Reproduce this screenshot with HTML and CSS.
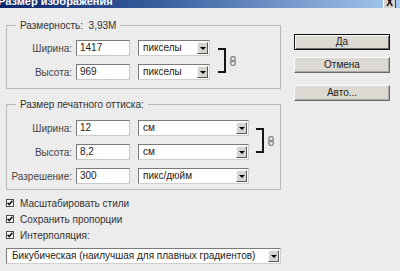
FILE: index.html
```html
<!DOCTYPE html>
<html lang="ru">
<head>
<meta charset="utf-8">
<title>Размер изображения</title>
<link rel="stylesheet" href="styles.css">
</head>
<body>
<div class="window">
  <div class="titlebar">
    <span class="title">Размер изображения</span>
    <span class="close">X</span>
  </div>
  <div class="main">
    <div class="left">
      <fieldset class="group g1">
        <legend>Размерность:&nbsp;&nbsp;3,93M</legend>
        <div class="group-body">
          <div class="rows">
            <div class="row">
              <span class="lbl">Ширина:</span>
              <span class="field">1417</span>
              <span class="select s-short"><span class="val">пикселы</span><span class="arrow"></span></span>
            </div>
            <div class="row">
              <span class="lbl">Высота:</span>
              <span class="field">969</span>
              <span class="select s-short"><span class="val">пикселы</span><span class="arrow"></span></span>
            </div>
          </div>
          <div class="link">
            <span class="bracket"></span>
            <svg class="chain" width="6" height="10" viewBox="0 0 6 10"><rect x="0.75" y="0.5" width="4.5" height="5" rx="2.2" fill="none" stroke="#8a8a8a" stroke-width="1.4"/><rect x="0.75" y="4.5" width="4.5" height="5" rx="2.2" fill="none" stroke="#8a8a8a" stroke-width="1.4"/></svg>
          </div>
        </div>
      </fieldset>

      <fieldset class="group g2">
        <legend>Размер печатного оттиска:</legend>
        <div class="group-body">
          <div class="rows">
            <div class="row">
              <span class="lbl">Ширина:</span>
              <span class="field">12</span>
              <span class="select s-long"><span class="val">см</span><span class="arrow"></span></span>
            </div>
            <div class="row">
              <span class="lbl">Высота:</span>
              <span class="field">8,2</span>
              <span class="select s-long"><span class="val">см</span><span class="arrow"></span></span>
            </div>
            <div class="row">
              <span class="lbl">Разрешение:</span>
              <span class="field">300</span>
              <span class="select s-long"><span class="val">пикс/дюйм</span><span class="arrow"></span></span>
            </div>
          </div>
          <div class="link">
            <span class="bracket"></span>
            <svg class="chain" width="6" height="10" viewBox="0 0 6 10"><rect x="0.75" y="0.5" width="4.5" height="5" rx="2.2" fill="none" stroke="#8a8a8a" stroke-width="1.4"/><rect x="0.75" y="4.5" width="4.5" height="5" rx="2.2" fill="none" stroke="#8a8a8a" stroke-width="1.4"/></svg>
          </div>
        </div>
      </fieldset>

      <div class="checks">
        <div class="check"><span class="box"><svg width="6" height="6" viewBox="0 0 6 6"><polyline points="0.6,2.8 2.2,4.6 5.4,0.8" fill="none" stroke="#111" stroke-width="1.6"/></svg></span>Масштабировать стили</div>
        <div class="check"><span class="box"><svg width="6" height="6" viewBox="0 0 6 6"><polyline points="0.6,2.8 2.2,4.6 5.4,0.8" fill="none" stroke="#111" stroke-width="1.6"/></svg></span>Сохранить пропорции</div>
        <div class="check"><span class="box"><svg width="6" height="6" viewBox="0 0 6 6"><polyline points="0.6,2.8 2.2,4.6 5.4,0.8" fill="none" stroke="#111" stroke-width="1.6"/></svg></span>Интерполяция:</div>
      </div>

      <div class="select s-wide"><span class="val">Бикубическая (наилучшая для плавных градиентов)</span><span class="arrow"></span></div>
    </div>

    <div class="buttons">
      <div class="btn default">Да</div>
      <div class="btn">Отмена</div>
      <div class="btn auto">Авто...</div>
    </div>
  </div>
</div>
</body>
</html>
```

FILE: styles.css
```css
* { box-sizing: border-box; }

html, body {
  margin: 0;
  padding: 0;
  background: #ececec;
}

body {
  font-family: "Liberation Sans", Arial, sans-serif;
  font-size: 10px;
  color: #333;
  width: 400px;
  height: 271px;
  overflow: hidden;
}

.titlebar {
  height: 8px;
  display: flex;
  justify-content: space-between;
  align-items: flex-start;
  overflow: hidden;
  background: linear-gradient(to right, #0a246a 0%, #3a5f9e 40%, #a6caf0 100%);
}

.title {
  color: #fff;
  font-weight: bold;
  font-size: 11px;
  line-height: 13px;
  margin-top: -5px;
  margin-left: -2px;
  white-space: nowrap;
}

.close {
  width: 13px;
  height: 8px;
  margin-right: 4px;
  background: #d6d3cc;
  border-right: 1px solid #404040;
  border-left: 1px solid #fff;
  color: #000;
  font-weight: bold;
  font-size: 10px;
  line-height: 10px;
  text-align: center;
  overflow: hidden;
  display: flex;
  justify-content: center;
  align-items: flex-end;
}

.main {
  display: flex;
  padding: 11px 0 0 6px;
}

.left {
  width: 275px;
  display: flex;
  flex-direction: column;
}

.group {
  margin: 0;
  padding: 8px 0 8px 0;
  border: 1px solid #b9b9b9;
  min-width: 0;
}

.group legend {
  margin-left: 9px;
  padding: 0 4px;
  line-height: 13px;
  color: #333;
}

.g2 {
  margin-top: 9px;
  padding-top: 9px;
  padding-bottom: 5px;
}

.group-body {
  display: flex;
  align-items: flex-start;
}

.rows {
  display: flex;
  flex-direction: column;
  gap: 8px;
}

.row {
  display: flex;
  align-items: center;
  height: 16px;
}

.lbl {
  width: 65px;
  margin-right: 4px;
  text-align: right;
  color: #444;
  white-space: nowrap;
}

.field {
  width: 54px;
  height: 16px;
  margin-right: 8px;
  padding-left: 3px;
  line-height: 14px;
  background: #fff;
  border: 1px solid #c9c9c9;
  border-top-color: #7a7a7a;
  border-left-color: #7a7a7a;
  color: #222;
}

.select {
  height: 16px;
  display: flex;
  align-items: stretch;
  background: #fff;
  border: 1px solid #cfcfcf;
  border-top-color: #7a7a7a;
  border-left-color: #7a7a7a;
  color: #222;
  padding: 1px;
}

.select .val {
  flex: 1;
  padding-left: 3px;
  line-height: 12px;
  white-space: nowrap;
  overflow: hidden;
}

.select .arrow {
  width: 11px;
  background: #d8d5ce;
  border: 1px solid;
  border-color: #f4f4f4 #5a5a5a #5a5a5a #f4f4f4;
  display: flex;
  justify-content: center;
  align-items: center;
}

.select .arrow::after {
  content: "";
  border-left: 3px solid transparent;
  border-right: 3px solid transparent;
  border-top: 3px solid #000;
}

.s-short { width: 72px; }
.s-long { width: 111px; }

.link {
  display: flex;
  align-items: center;
  margin-top: 8px;
  margin-left: 8px;
}

.g2 .link { margin-left: 7px; }

.bracket {
  width: 8px;
  height: 25px;
  border: 2px solid #151515;
  border-left: none;
}

.chain {
  margin-left: 4px;
  display: block;
}

.checks {
  margin-top: 5px;
  display: flex;
  flex-direction: column;
}

.check {
  height: 16px;
  display: flex;
  align-items: center;
  color: #333;
  white-space: nowrap;
}

.box {
  width: 8px;
  height: 8px;
  margin-right: 6px;
  background: #fff;
  border: 1px solid #4a4a4a;
  display: flex;
  justify-content: center;
  align-items: center;
}

.box svg { display: block; }

.s-wide {
  margin-top: 5px;
  width: 275px;
}

.s-wide .val {
  padding-left: 4px;
}

.buttons {
  margin-left: 13px;
  margin-top: 15px;
  width: 96px;
  display: flex;
  flex-direction: column;
  gap: 7px;
}

.btn {
  height: 16px;
  line-height: 14px;
  text-align: center;
  color: #222;
  background: #dcd9d3;
  border: 1px solid;
  border-color: #fbfbfb #6b6b6b #6b6b6b #fbfbfb;
  box-shadow: inset -1px -1px 0 #a9a9a9;
}

.btn.default {
  border-color: #111;
  box-shadow: inset 1px 1px 0 #fbfbfb, inset -1px -1px 0 #6b6b6b;
}

.btn.auto { margin-top: 5px; }
```
